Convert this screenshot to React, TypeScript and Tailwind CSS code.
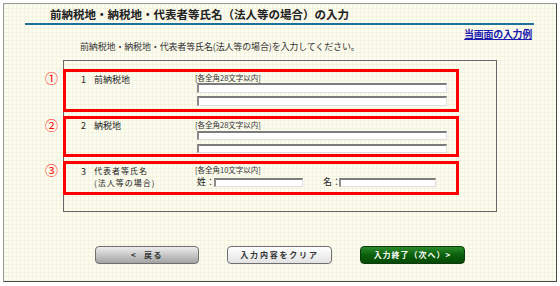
import React from 'react';

const font = "font-['Noto_Sans_CJK_JP','Noto_Sans',sans-serif]";

const inputCls =
  'block bg-white border-t-2 border-l-2 border-r border-b border-t-[#7c7c7c] border-l-[#8c8c8c] border-r-[#dedede] border-b-[#dedede] outline-none';

const Mark: React.FC<{ n: string }> = ({ n }) => (
  <span className="absolute -left-[21px] top-[-1px] text-[13px] leading-[13px] text-[#ff0000]">{n}</span>
);

const Hint: React.FC<{ text: string }> = ({ text }) => (
  <div className="text-[7.5px] leading-[8px] text-[#333]">{text}</div>
);

export default function App() {
  return (
    <div className={`w-[560px] h-[286px] bg-white pt-[3px] pl-[3px] ${font}`}>
      <div className="w-[554px] h-[279px] flex flex-col border border-[#9a9a9a] border-r-[#4a4a4a] border-b-[#4a4a4a] bg-[#fcfcf1] bg-[image:linear-gradient(#f3f3df_1px,transparent_1px),linear-gradient(90deg,#f3f3df_1px,transparent_1px)] bg-[length:4px_4px]">
        {/* title */}
        <h1 className="ml-[46px] mt-[4px] text-[11.5px] leading-[12px] font-bold text-[#222]">
          前納税地・納税地・代表者等氏名（法人等の場合）の入力
        </h1>
        <div className="ml-[21px] mt-[3px] w-[509px] h-[2px] bg-[#1e6f9a]"></div>

        <a className="self-end mr-[24px] mt-[4px] text-[10px] leading-[10px] font-bold tracking-[-0.3px] text-[#1c1cb0] underline">
          当画面の入力例
        </a>
        <p className="ml-[76px] mt-[3px] text-[9px] leading-[10px] tracking-[-0.15px] text-[#333]">
          前納税地・納税地・代表者等氏名(法人等の場合)を入力してください。
        </p>

        {/* form box */}
        <div className="ml-[59px] mt-[8px] w-[434px] h-[152px] border border-[#666] flex flex-col gap-[4px] pt-[8px] text-[#222]">
          <div className="relative -ml-[1px] w-[396px] h-[43px] border-[3px] border-[#ff0000] flex">
            <Mark n="①" />
            <div className="w-[129px] pl-[15px] pt-[3px] flex text-[9px] leading-[10px]">
              <span className="w-[13px]">1</span>
              <span>前納税地</span>
            </div>
            <div className="pt-[2px]">
              <Hint text="[各全角28文字以内]" />
              <input className={`${inputCls} ml-[2px] mt-[1px] w-[250px] h-[10px]`} />
              <input className={`${inputCls} ml-[2px] mt-[3px] w-[250px] h-[10px]`} />
            </div>
          </div>

          <div className="relative -ml-[1px] w-[396px] h-[41px] border-[3px] border-[#ff0000] flex">
            <Mark n="②" />
            <div className="w-[129px] pl-[15px] pt-[2px] flex text-[9px] leading-[10px]">
              <span className="w-[13px]">2</span>
              <span>納税地</span>
            </div>
            <div className="pt-[2px]">
              <Hint text="[各全角28文字以内]" />
              <input className={`${inputCls} ml-[2px] mt-[2px] w-[250px] h-[9px]`} />
              <input className={`${inputCls} ml-[2px] mt-[4px] w-[250px] h-[9px]`} />
            </div>
          </div>

          <div className="relative -ml-[1px] w-[396px] h-[34px] border-[3px] border-[#ff0000] flex">
            <Mark n="③" />
            <div className="w-[129px] pl-[15px] pt-[1px] flex">
              <span className="w-[13px] pt-[2px] text-[9px] leading-[10px]">3</span>
              <span className="text-[8px] leading-[12px] tracking-[1px]">
                代表者等氏名
                <br />
                (法人等の場合)
              </span>
            </div>
            <div className="pt-[2px]">
              <Hint text="[各全角10文字以内]" />
              <div className="mt-[1px] h-[12px] flex items-end text-[9px] leading-[10px]">
                <span className="ml-[2px] w-[17px]">姓：</span>
                <input className={`${inputCls} w-[89px] h-[9px]`} />
                <span className="ml-[20px] w-[16px]">名：</span>
                <input className={`${inputCls} w-[97px] h-[9px]`} />
              </div>
            </div>
          </div>
        </div>

        {/* buttons */}
        <div className="mt-[34px] flex justify-center gap-[28px]">
          <button className="w-[104px] h-[18px] rounded-[4px] border border-[#6f6f6f] bg-linear-to-b from-[#ededed] to-[#a3a3a3] text-[8px] font-bold tracking-[1.5px] text-[#333]">
            &lt;&nbsp;&nbsp;戻る
          </button>
          <button className="w-[105px] h-[18px] rounded-[4px] border border-[#6f6f6f] bg-linear-to-b from-white to-[#e2e2e2] text-[8px] font-bold tracking-[1.8px] text-[#333]">
            入力内容をクリア
          </button>
          <button className="w-[105px] h-[18px] rounded-[4px] border border-[#0b3a0b] bg-linear-to-b from-[#2a8a2a] via-[#0b600b] to-[#064806] text-[8px] font-bold tracking-[1px] text-white">
            入力終了（次へ）&gt;
          </button>
        </div>
      </div>
    </div>
  );
}
